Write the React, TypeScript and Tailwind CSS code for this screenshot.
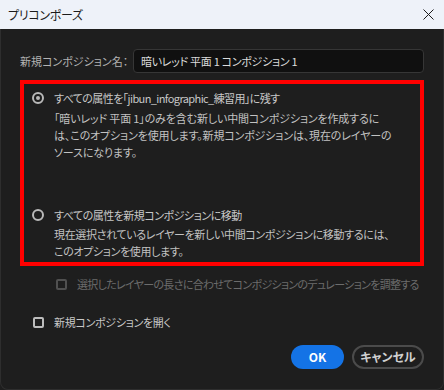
import React from 'react'

const jp = {
  fontFamily: '"Noto Sans CJK JP", "Noto Sans", sans-serif',
  fontFeatureSettings: '"palt"',
}

function Radio({ checked }: { checked?: boolean }) {
  return (
    <span className="flex h-[12px] w-[12px] shrink-0 items-center justify-center rounded-full border-2 border-[#b9b9b9]">
      {checked && <span className="h-[4px] w-[4px] rounded-full bg-[#b9b9b9]" />}
    </span>
  )
}

function Check({ disabled }: { disabled?: boolean }) {
  return (
    <span
      className={
        disabled
          ? 'h-[11px] w-[11px] shrink-0 rounded-[2px] border-2 border-[#505050]'
          : 'h-[11px] w-[11px] shrink-0 rounded-[2px] border-2 border-[#bdbdbd]'
      }
    />
  )
}

export default function App() {
  return (
    <div
      className="flex h-[390px] w-[444px] flex-col overflow-hidden whitespace-nowrap bg-[#1e1e1e] text-[11px]"
      style={jp}
    >
      <div className="flex h-[29px] shrink-0 items-center justify-between bg-[#eef2f9] pl-[8px] pr-[10px]">
        <span className="text-[12px] tracking-[-0.3px] text-[#1b1b1b]">プリコンポーズ</span>
        <svg width="11" height="11" viewBox="0 0 11 11">
          <path d="M0.5 0.5 L10.5 10.5 M10.5 0.5 L0.5 10.5" stroke="#1b1b1b" strokeWidth="1" />
        </svg>
      </div>

      <div className="flex flex-1 flex-col rounded-b-[8px] border-x border-b border-[#2e2e2e] px-[19px] pt-[20px]">
        <div className="flex items-center">
          <span className="w-[113px] text-[#b3b3b3]">新規コンポジション名：</span>
          <div className="flex h-[24px] flex-1 items-center rounded-[4px] border border-[#363636] bg-[#101010] px-[7px] tracking-[-0.3px] text-[#dcdcdc]">
            暗いレッド 平面 1 コンポジション 1
          </div>
        </div>

        <div className="mt-[7px] flex h-[186px] flex-col border-4 border-[#ff0000] pl-[8px] pt-[5px]">
          <div className="flex h-[18px] items-center gap-[10px] text-[#c8c8c8]">
            <Radio checked />
            <span className="tracking-[-0.6px]">すべての属性を「jibun_infographic_練習用」に残す</span>
          </div>
          <div className="mt-[3px] pl-[22px] leading-[17px] tracking-[-0.15px] text-[#c2c2c2]">
            「暗いレッド 平面 1」のみを含む新しい中間コンポジションを作成するに
            <br />
            は、このオプションを使用します。新規コンポジションは、現在のレイヤーの
            <br />
            ソースになります。
          </div>

          <div className="mt-[45px] flex h-[18px] items-center gap-[10px] text-[#c8c8c8]">
            <Radio />
            <span className="tracking-[-0.5px]">すべての属性を新規コンポジションに移動</span>
          </div>
          <div className="mt-[2px] pl-[22px] leading-[17px] tracking-[-0.35px] text-[#c2c2c2]">
            現在選択されているレイヤーを新しい中間コンポジションに移動するには、
            <br />
            このオプションを使用します。
          </div>
        </div>

        <div className="mt-[9px] flex h-[18px] items-center gap-[10px] pl-[36px] text-[#6c6c6c]">
          <Check disabled />
          <span className="tracking-[-0.7px]">
            選択したレイヤーの長さに合わせてコンポジションのデュレーションを調整する
          </span>
        </div>

        <div className="mt-[20px] flex h-[18px] items-center gap-[10px] pl-[13px] text-[#c8c8c8]">
          <Check />
          <span className="tracking-[-0.3px]">新規コンポジションを開く</span>
        </div>

        <div className="mt-[14px] flex justify-end gap-[8px]">
          <button className="h-[24px] w-[53px] rounded-full bg-[#1473e6] text-[12px] font-bold text-white">
            OK
          </button>
          <button className="h-[24px] w-[72px] rounded-full border-2 border-[#4b4b4b] text-[12px] font-bold text-[#d0d0d0]">
            キャンセル
          </button>
        </div>
      </div>
    </div>
  )
}
